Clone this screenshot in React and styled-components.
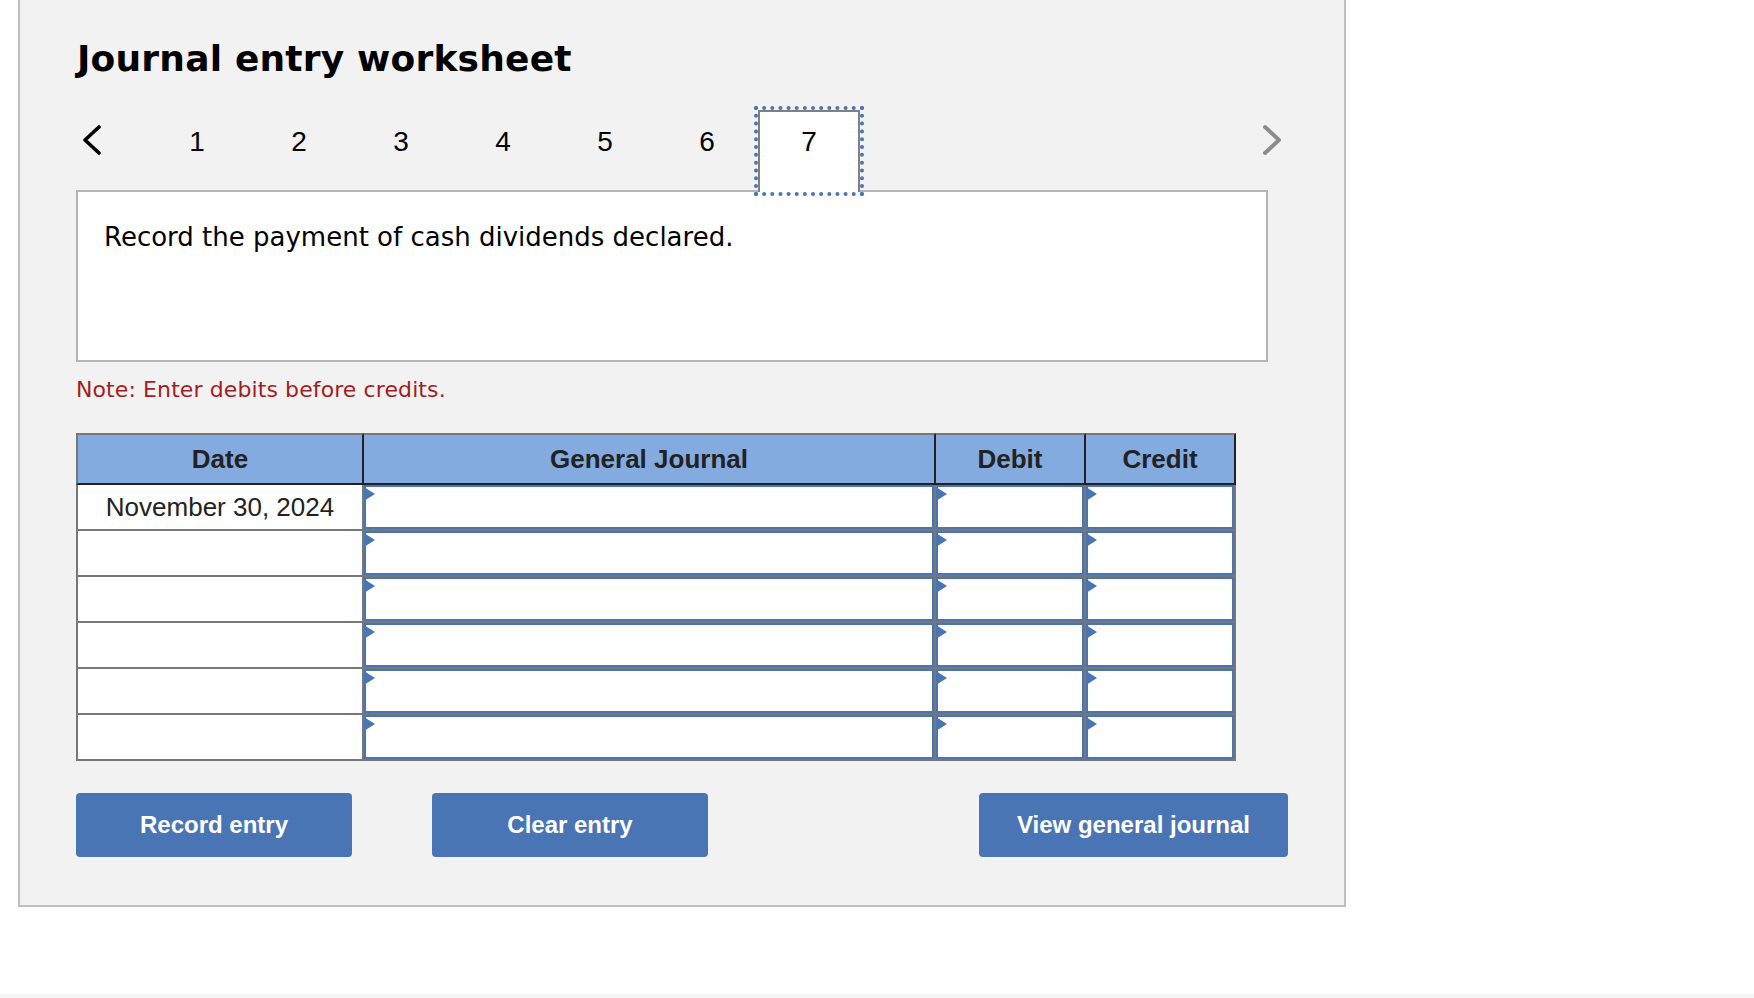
import React from 'react';
import styled, { createGlobalStyle } from 'styled-components';

const GlobalStyle = createGlobalStyle`
  html, body {
    margin: 0;
    padding: 0;
    background: #fff;
  }
`;

const Page = styled.div`
  padding-left: 18px;
`;

const Panel = styled.div`
  width: 1328px;
  box-sizing: border-box;
  padding: 37px 56px 48px;
  background: #f2f2f2;
  border: 2px solid #bfbfbf;
  border-top: none;
`;

const Title = styled.h1`
  margin: 0;
  padding-left: 1px;
  font-family: "DejaVu Sans", Verdana, sans-serif;
  font-size: 36px;
  font-weight: 700;
  line-height: 44px;
  letter-spacing: 0.2px;
  color: #000;
`;

const NavRow = styled.div`
  position: relative;
  z-index: 1;
  display: flex;
  align-items: flex-start;
  height: 82px;
  margin-top: 29px;
`;

const Arrow = styled.svg`
  flex: none;
  width: 20px;
  height: 32px;
  margin: 14px ${(p) => p.$right || 0}px 0 ${(p) => p.$left || 0}px;
  fill: none;
  stroke: ${(p) => p.$color};
  stroke-width: ${(p) => p.$weight};
  stroke-linecap: round;
  stroke-linejoin: round;
`;

const Tabs = styled.div`
  display: flex;
  margin-left: 43px;
  margin-right: auto;
`;

const Tab = styled.div`
  box-sizing: border-box;
  width: 102px;
  height: 82px;
  border: 2px solid ${(p) => (p.$active ? '#808080' : 'transparent')};
  border-bottom: none;
  background: ${(p) => (p.$active ? '#fff' : 'transparent')};
  outline: ${(p) => (p.$active ? '4px dotted #4a75b4' : 'none')};
  font-family: "Liberation Sans", Arial, sans-serif;
  font-size: 28px;
  line-height: 59px;
  text-align: center;
  color: #000;
`;

const PromptBox = styled.div`
  box-sizing: border-box;
  width: 1192px;
  height: 172px;
  margin-top: -2px;
  padding: 27px 26px 0;
  background: #fff;
  border: 2px solid #b5b5b5;
  font-family: "DejaVu Sans", Verdana, sans-serif;
  font-size: 26px;
  line-height: 36px;
  color: #000;
`;

const Note = styled.p`
  margin: 14px 0 29px;
  font-family: "DejaVu Sans", Verdana, sans-serif;
  font-size: 22px;
  line-height: 28px;
  letter-spacing: 0.1px;
  color: #a31d1d;
`;

const Journal = styled.table`
  width: 1160px;
  table-layout: fixed;
  border-collapse: separate;
  border-spacing: 0;
  font-family: "Liberation Sans", Arial, sans-serif;
  font-size: 26px;
  color: #222;
`;

const Column = styled.col`
  width: ${(p) => p.$width}px;
`;

const HeadCell = styled.th`
  box-sizing: border-box;
  height: 52px;
  padding: 0;
  background: #83abe0;
  border-top: 2px solid #777;
  border-right: 2px solid #222;
  border-bottom: 2px solid #222;
  font-weight: 700;
  text-align: center;

  &:first-child {
    border-left: 2px solid #777;
  }
`;

const DateCell = styled.td`
  box-sizing: border-box;
  height: 46px;
  padding: 0;
  background: #fff;
  border-left: 2px solid #777;
  border-right: 2px solid #777;
  border-bottom: 2px solid #777;
  text-align: center;
`;

const FieldCell = styled.td`
  position: relative;
  box-sizing: border-box;
  height: 46px;
  padding: 0;
  background: #fff;
  border-right: 2px solid #777;
  border-bottom: 2px solid #777;

  &::before {
    content: '';
    position: absolute;
    top: 2px;
    left: 0;
    border-top: 7px solid transparent;
    border-bottom: 7px solid transparent;
    border-left: 11px solid #4a75b4;
  }
`;

const Field = styled.input`
  display: block;
  box-sizing: border-box;
  width: 100%;
  height: 44px;
  padding: 0 12px;
  background: #fff;
  border: 2px solid #4a75b4;
  border-radius: 0;
  outline: none;
`;

const Actions = styled.div`
  display: flex;
  gap: 80px;
  margin-top: 32px;
`;

const ActionButton = styled.button`
  width: ${(p) => p.$width}px;
  height: 64px;
  margin-left: ${(p) => (p.$push ? 'auto' : '0')};
  padding: 0;
  background: #4a75b4;
  border: none;
  border-radius: 4px;
  font-family: "Liberation Sans", Arial, sans-serif;
  font-size: 24px;
  font-weight: 700;
  color: #fff;
`;

const BottomStrip = styled.div`
  height: 4px;
  margin-top: 87px;
  background: #f4f4f4;
`;

const columns = [
  { title: 'General Journal', width: 572 },
  { title: 'Debit', width: 150 },
  { title: 'Credit', width: 150 },
];

const rows = ['November 30, 2024', '', '', '', '', ''];

export default function App() {
  return (
    <>
      <GlobalStyle />
      <Page>
        <Panel>
          <Title>Journal entry worksheet</Title>

          <NavRow>
            <Arrow $left={7} $color="#000" $weight={3.6} viewBox="0 0 20 32">
              <polyline points="16,3 2,16 16,29" />
            </Arrow>
            <Tabs>
              {[1, 2, 3, 4, 5, 6, 7].map((n) => (
                <Tab key={n} $active={n === 7}>{n}</Tab>
              ))}
            </Tabs>
            <Arrow $right={6} $color="#8c8c8c" $weight={4} viewBox="0 0 20 32">
              <polyline points="3,3 17,16 3,29" />
            </Arrow>
          </NavRow>

          <PromptBox>Record the payment of cash dividends declared.</PromptBox>
          <Note>Note: Enter debits before credits.</Note>

          <Journal>
            <colgroup>
              <Column $width={288} />
              {columns.map((c) => <Column key={c.title} $width={c.width} />)}
            </colgroup>
            <thead>
              <tr>
                <HeadCell>Date</HeadCell>
                {columns.map((c) => <HeadCell key={c.title}>{c.title}</HeadCell>)}
              </tr>
            </thead>
            <tbody>
              {rows.map((date, i) => (
                <tr key={i}>
                  <DateCell>{date}</DateCell>
                  {columns.map((c) => (
                    <FieldCell key={c.title}><Field type="text" /></FieldCell>
                  ))}
                </tr>
              ))}
            </tbody>
          </Journal>

          <Actions>
            <ActionButton $width={276}>Record entry</ActionButton>
            <ActionButton $width={276}>Clear entry</ActionButton>
            <ActionButton $width={309} $push>View general journal</ActionButton>
          </Actions>
        </Panel>
      </Page>
      <BottomStrip />
    </>
  );
}
